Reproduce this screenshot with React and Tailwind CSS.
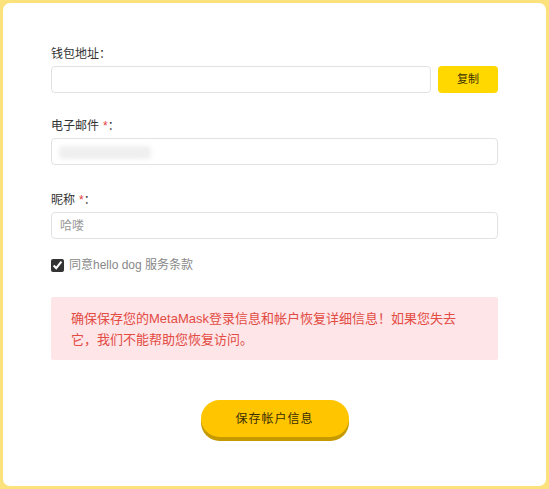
const font = { fontFamily: '"Liberation Sans", "Noto Sans CJK SC", sans-serif' };

const Label = ({ children, required }) => (
  <div className="h-[17px] text-[12px] leading-[17px] text-[#333] mb-[5px] flex items-baseline">
    <span>{children}</span>
    {required && <span className="text-[#e4393c] ml-[4px]">*</span>}
    <span className="font-['Noto_Sans_CJK_SC',sans-serif]">：</span>
  </div>
);

export default function App() {
  return (
    <div className="w-[549px] h-[489px] bg-[#fce27d] p-[3px]" style={font}>
      <div className="h-full bg-white rounded-[7px] px-[48px] pt-[41px]">
        <Label>钱包地址</Label>
        <div className="flex gap-[7px]">
          <input
            className="flex-1 h-[27px] border border-[#e2e2e2] rounded-[4px] px-[8px] text-[12px] outline-none"
            defaultValue=""
          />
          <button className="w-[60px] h-[27px] bg-[#ffd800] rounded-[4px] text-[11px] text-[#3a3200]">
            复制
          </button>
        </div>

        <div className="mt-[23px]">
          <Label required>电子邮件</Label>
          <div className="h-[27px] border border-[#e2e2e2] rounded-[4px] flex items-center px-[7px] pt-[2px]">
            <div className="w-[92px] h-[13px] bg-[#efefef] blur-[2px] rounded-sm" />
          </div>
        </div>

        <div className="mt-[25px]">
          <Label required>昵称</Label>
          <input
            className="w-full h-[27px] border border-[#e2e2e2] rounded-[4px] px-[8px] text-[12px] text-[#333] placeholder:text-[#999] outline-none"
            placeholder="哈喽"
          />
        </div>

        <label className="flex items-center gap-[5px] mt-[17px] text-[12px] text-[#888]">
          <input type="checkbox" defaultChecked className="w-[13px] h-[13px] m-0 accent-[#333]" />
          <span>同意hello dog 服务条款</span>
        </label>

        <div className="mt-[23px] h-[63px] bg-[#fde5e8] rounded-[2px] px-[20px] pt-[11px] text-[13px] leading-[21px] text-[#e34b43] whitespace-nowrap">
          确保保存您的MetaMask登录信息和帐户恢复详细信息！如果您失去
          <br />
          它，我们不能帮助您恢复访问。
        </div>

        <div className="flex justify-center mt-[40px]">
          <button className="w-[148px] h-[37px] rounded-full bg-[#ffc600] shadow-[0_4px_0_#c49a00] text-[12px] tracking-[1px] text-[#3a2e00]">
            保存帐户信息
          </button>
        </div>
      </div>
    </div>
  );
}
